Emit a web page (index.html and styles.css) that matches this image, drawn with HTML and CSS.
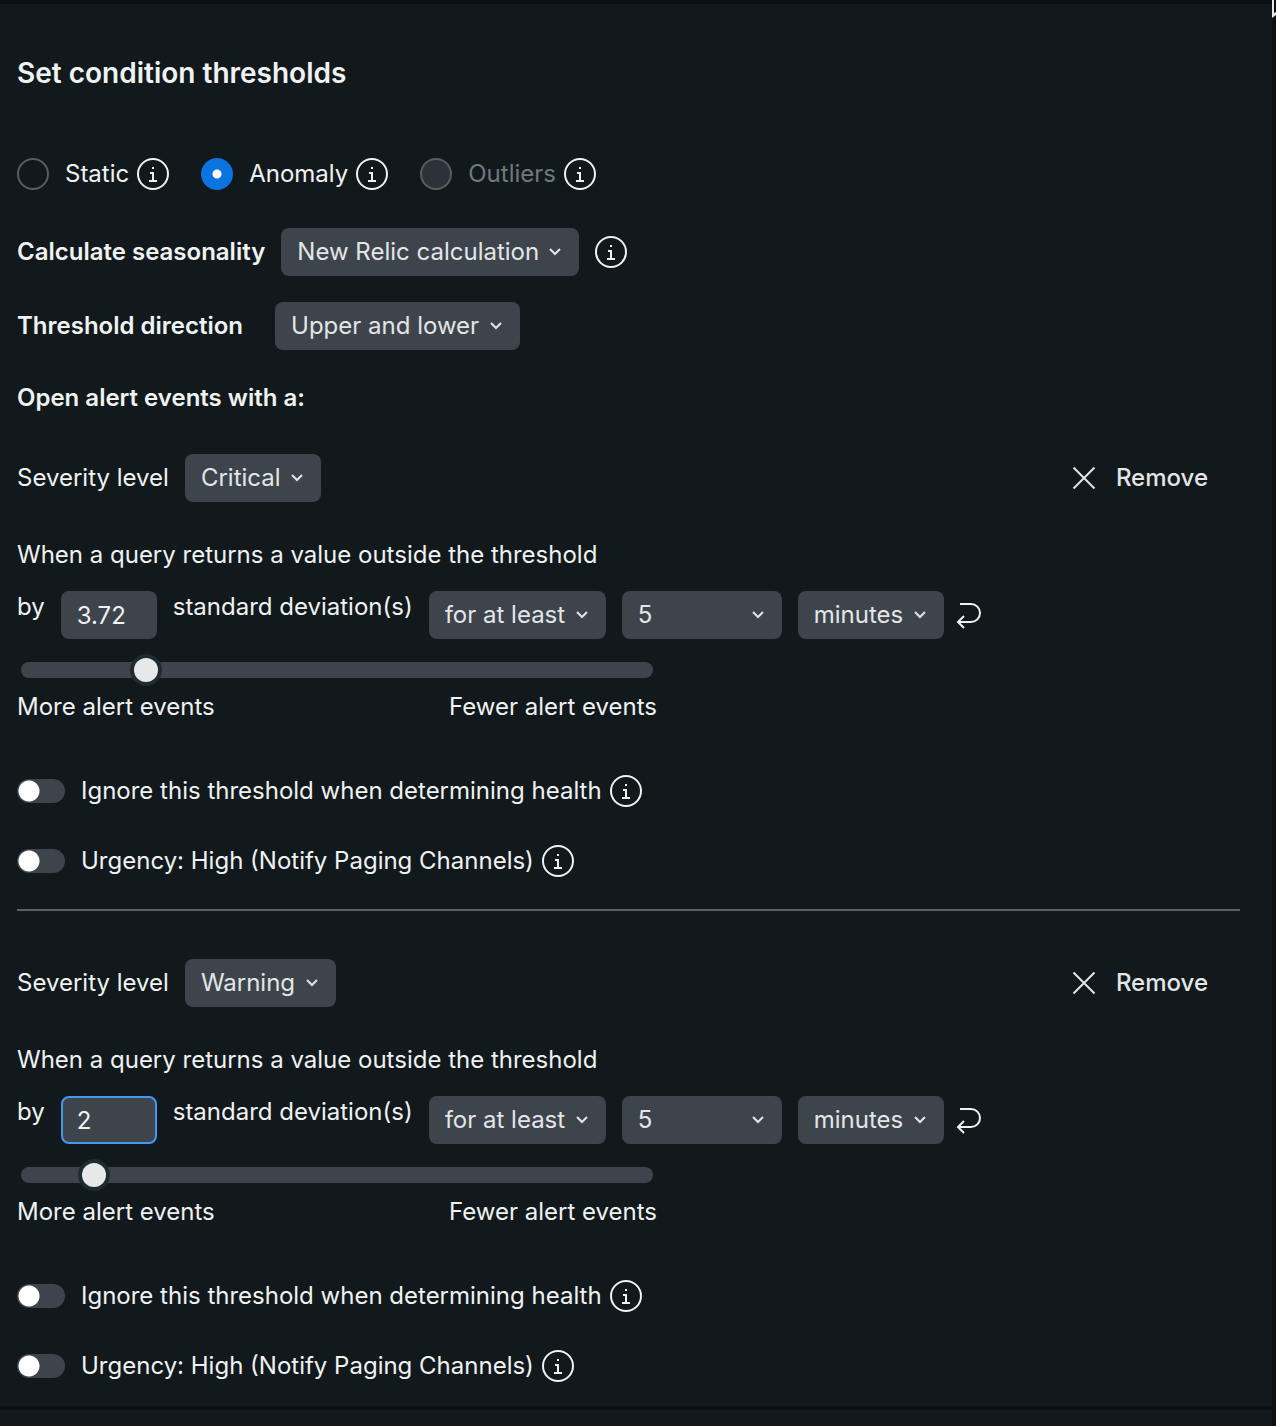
FILE: index.html
```html
<!DOCTYPE html>
<html lang="en">
<head>
  <meta charset="UTF-8" />
  <meta name="viewport" content="width=device-width, initial-scale=1.0"/>
  <title>Set condition thresholds</title>
  <link rel="stylesheet" href="styles.css">
</head>
<body>

  <!-- Shared icons -->
  <svg class="sprite" aria-hidden="true">
    <symbol id="icon-info" viewBox="0 0 32 32">
      <circle cx="16" cy="16" r="15" />
      <path d="M13 15h3v8M12 23h8M16 9v2" />
    </symbol>
    <symbol id="icon-close" viewBox="0 0 24 24">
      <path d="M1.500 1.500l21 21M22.500 1.500l-21 21" />
    </symbol>
    <symbol id="icon-return" viewBox="0 0 26 28">
      <path d="M4 3h11a9 9 0 0 1 0 18H2M8 15l-6 6 6 6" />
    </symbol>
  </svg>

  <main class="panel">
    <h2>Set condition thresholds</h2>

    <!-- Threshold type -->
    <div class="types">
      <div class="option">
        <label><input type="radio" name="type" class="radio"> Static</label>
        <button type="button" class="info" aria-label="About static"><svg><use href="#icon-info"/></svg></button>
      </div>
      <div class="option">
        <label><input type="radio" name="type" class="radio" checked> Anomaly</label>
        <button type="button" class="info" aria-label="About anomaly"><svg><use href="#icon-info"/></svg></button>
      </div>
      <div class="option">
        <label class="disabled"><input type="radio" name="type" class="radio" disabled> Outliers</label>
        <button type="button" class="info" aria-label="About outliers"><svg><use href="#icon-info"/></svg></button>
      </div>
    </div>

    <div class="row seasonality">
      <label class="strong" for="seasonality">Calculate seasonality</label>
      <select id="seasonality"><option>New Relic calculation</option></select>
      <button type="button" class="info" aria-label="About seasonality"><svg><use href="#icon-info"/></svg></button>
    </div>

    <div class="row direction">
      <label class="strong" for="direction">Threshold direction</label>
      <select id="direction"><option>Upper and lower</option></select>
    </div>

    <h3>Open alert events with a:</h3>

    <!-- Critical -->
    <section class="threshold">
      <div class="row">
        <label for="level1">Severity level</label>
        <select id="level1"><option>Critical</option></select>
        <button type="button" class="remove"><svg><use href="#icon-close"/></svg>Remove</button>
      </div>

      <p>When a query returns a value outside the threshold</p>

      <div class="condition">
        <label for="deviation1">by</label>
        <input type="number" id="deviation1" class="number" value="3.72" step="any">
        <span>standard deviation(s)</span>
        <select aria-label="Condition"><option>for at least</option></select>
        <select class="duration" aria-label="Duration"><option>5</option></select>
        <select aria-label="Unit"><option>minutes</option></select>
        <button type="button" class="return" aria-label="Reset"><svg><use href="#icon-return"/></svg></button>
      </div>

      <div class="sensitivity">
        <input type="range" min="0" max="20" step="0.01" value="3.72" aria-label="Standard deviations">
        <div class="scale"><span>More alert events</span><span>Fewer alert events</span></div>
      </div>

      <div class="option">
        <label><input type="checkbox" class="switch"> Ignore this threshold when determining health</label>
        <button type="button" class="info" aria-label="About health"><svg><use href="#icon-info"/></svg></button>
      </div>
      <div class="option">
        <label><input type="checkbox" class="switch"> Urgency: High (Notify Paging Channels)</label>
        <button type="button" class="info" aria-label="About urgency"><svg><use href="#icon-info"/></svg></button>
      </div>
    </section>

    <!-- Warning -->
    <section class="threshold">
      <div class="row">
        <label for="level2">Severity level</label>
        <select id="level2"><option>Warning</option></select>
        <button type="button" class="remove"><svg><use href="#icon-close"/></svg>Remove</button>
      </div>

      <p>When a query returns a value outside the threshold</p>

      <div class="condition">
        <label for="deviation2">by</label>
        <input type="number" id="deviation2" class="number active" value="2" step="any">
        <span>standard deviation(s)</span>
        <select aria-label="Condition"><option>for at least</option></select>
        <select class="duration" aria-label="Duration"><option>5</option></select>
        <select aria-label="Unit"><option>minutes</option></select>
        <button type="button" class="return" aria-label="Reset"><svg><use href="#icon-return"/></svg></button>
      </div>

      <div class="sensitivity">
        <input type="range" min="0" max="20" step="0.01" value="2" aria-label="Standard deviations">
        <div class="scale"><span>More alert events</span><span>Fewer alert events</span></div>
      </div>

      <div class="option">
        <label><input type="checkbox" class="switch"> Ignore this threshold when determining health</label>
        <button type="button" class="info" aria-label="About health"><svg><use href="#icon-info"/></svg></button>
      </div>
      <div class="option">
        <label><input type="checkbox" class="switch"> Urgency: High (Notify Paging Channels)</label>
        <button type="button" class="info" aria-label="About urgency"><svg><use href="#icon-info"/></svg></button>
      </div>
    </section>
  </main>

  <div class="next-panel"></div>

  <!-- Mouse pointer over the window edge -->
  <svg class="pointer" viewBox="0 0 4 18" aria-hidden="true"><path d="M0 0h2v13l2-1v3l-4 3z" /></svg>

</body>
</html>
```
FILE: styles.css
```css
* {
  box-sizing: border-box;
}

body {
  display: flex;
  flex-direction: column;
  gap: 4px;
  min-height: 100vh;
  margin: 0;
  padding: 4px 4px 0 0;
  background: #0b1011;
  color: #f0f2f2;
  font-family: Inter, "Liberation Sans", sans-serif;
  font-size: 24px;
  font-optical-sizing: none;
  line-height: 32px;
}

.sprite {
  display: none;
}

svg {
  display: block;
  fill: none;
  stroke: currentColor;
  stroke-width: 2;
}

.panel,
.next-panel {
  background: #12191c;
}

.panel {
  padding: 51px 32px 24px 17px;
}

.next-panel {
  flex: 1;
}

h2, h3, p {
  margin: 0;
}

h2 {
  font-size: 28px;
  font-weight: 600;
  line-height: 36px;
}

h3 {
  margin-top: 32px;
  font-size: 24px;
  font-weight: 600;
  line-height: 32px;
}

.strong {
  font-weight: 600;
}

.types {
  display: flex;
  flex-wrap: wrap;
  gap: 32px;
  margin-top: 67px;
}

.option {
  display: flex;
  align-items: center;
  gap: 8px;
}

.option label {
  display: flex;
  align-items: center;
  gap: 16px;
}

.option .disabled {
  color: #70787d;
}

.row {
  display: flex;
  align-items: center;
  gap: 16px;
}

.seasonality {
  margin-top: 38px;
}

.direction {
  gap: 32px;
  margin-top: 26px;
}

/* Controls */
button, input, select {
  margin: 0;
  color: inherit;
  font: inherit;
  font-optical-sizing: none;
}

button {
  padding: 0;
  border: none;
  background: none;
  cursor: pointer;
}

.info svg {
  width: 32px;
  height: 32px;
}

select {
  height: 48px;
  padding: 0 40px 0 16px;
  border: none;
  border-radius: 8px;
  appearance: none;
  background: #3e444c url("data:image/svg+xml,%3Csvg xmlns='http://www.w3.org/2000/svg' width='12' height='8' fill='none' stroke='%23e3e6e6' stroke-width='2'%3E%3Cpath d='M1 1l5 5 5-5'/%3E%3C/svg%3E") no-repeat right 18px center;
  color: #e3e6e6;
}

.duration {
  width: 160px;
}

.number {
  width: 96px;
  height: 48px;
  padding: 0 14px;
  border: 2px solid #3e444c;
  border-radius: 8px;
  background: #3e444c;
  appearance: textfield;
}

.number::-webkit-inner-spin-button {
  display: none;
}

.number.active {
  border-color: #4797f0;
}

.radio {
  width: 32px;
  height: 32px;
  border: 2px solid #545e64;
  border-radius: 50%;
  appearance: none;
}

.radio:checked {
  border-color: #0c74df;
  background: radial-gradient(circle, #fff 4px, #0c74df 5px);
}

.radio:disabled {
  background: #293338;
}

.switch {
  width: 48px;
  height: 24px;
  border-radius: 12px;
  appearance: none;
  background: #3e444c radial-gradient(circle at 12px, #fff 10px, transparent 11px);
}

.remove {
  display: flex;
  align-items: center;
  gap: 20px;
  margin-left: auto;
  padding: 0 32px;
  color: #e3e6e6;
  font-weight: 500;
}

.remove svg {
  width: 24px;
  height: 24px;
}

/* Threshold blocks */
.threshold {
  margin-top: 40px;
}

.threshold + .threshold {
  margin-top: 32px;
  padding-top: 48px;
  border-top: 2px solid #566168;
}

.threshold p {
  margin-top: 37px;
}

.condition {
  display: flex;
  gap: 16px;
  margin-top: 20px;
}

.return {
  align-self: center;
  margin-left: -4px;
}

.return svg {
  width: 26px;
  height: 28px;
}

.sensitivity {
  max-width: 640px;
  margin: 15px 0 52px;
}

.scale {
  display: flex;
  justify-content: space-between;
  margin-top: 5px;
}

.threshold .option + .option {
  margin-top: 38px;
}

input[type="range"] {
  display: block;
  width: calc(100% - 8px);
  height: 32px;
  margin: 0 4px;
  appearance: none;
  background: none;
}

input[type="range"]::-webkit-slider-runnable-track {
  height: 16px;
  border-radius: 8px;
  background: #3e444c;
}

input[type="range"]::-webkit-slider-thumb {
  width: 24px;
  height: 24px;
  margin-top: -4px;
  border-radius: 50%;
  appearance: none;
  background: #e7e8ea;
  box-shadow: 0 0 0 4px #1f2b31;
}

.pointer {
  position: absolute;
  top: 0;
  right: 0;
  width: 4px;
  height: 18px;
  fill: #e8e8e8;
  stroke: none;
}
```
